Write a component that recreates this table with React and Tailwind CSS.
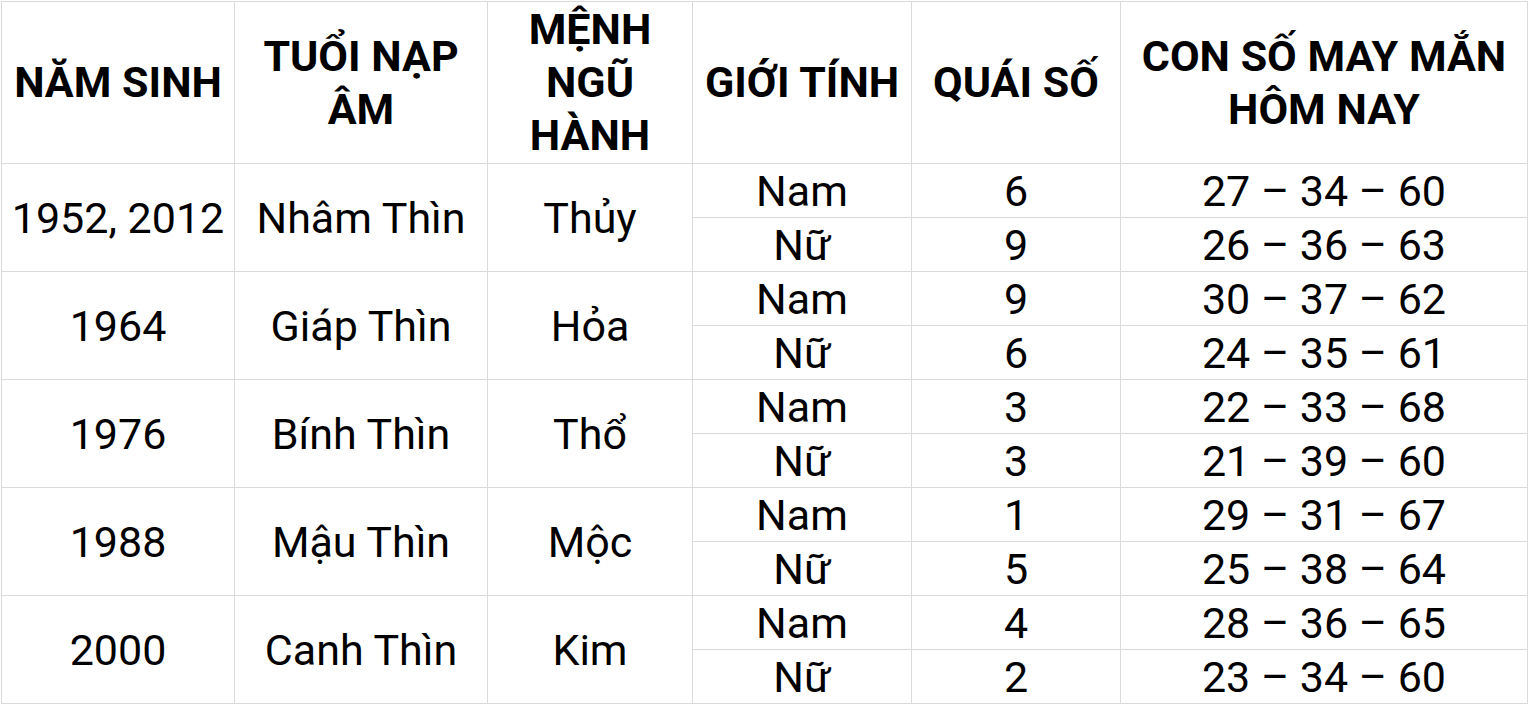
import React from 'react';

const rows = [
  { year: '1952, 2012', tuoi: 'Nhâm Thìn', menh: 'Thủy', nam: ['6', '27 – 34 – 60'], nu: ['9', '26 – 36 – 63'] },
  { year: '1964', tuoi: 'Giáp Thìn', menh: 'Hỏa', nam: ['9', '30 – 37 – 62'], nu: ['6', '24 – 35 – 61'] },
  { year: '1976', tuoi: 'Bính Thìn', menh: 'Thổ', nam: ['3', '22 – 33 – 68'], nu: ['3', '21 – 39 – 60'] },
  { year: '1988', tuoi: 'Mậu Thìn', menh: 'Mộc', nam: ['1', '29 – 31 – 67'], nu: ['5', '25 – 38 – 64'] },
  { year: '2000', tuoi: 'Canh Thìn', menh: 'Kim', nam: ['4', '28 – 36 – 65'], nu: ['2', '23 – 34 – 60'] },
];

const headers = [
  ['NĂM SINH'],
  ['TUỔI NẠP', 'ÂM'],
  ['MỆNH', 'NGŨ', 'HÀNH'],
  ['GIỚI TÍNH'],
  ['QUÁI SỐ'],
  ['CON SỐ MAY MẮN', 'HÔM NAY'],
];

function Cell({ children, span }) {
  return (
    <div className={`flex items-center justify-center bg-white text-center whitespace-nowrap ${span ? 'row-span-2' : ''}`}>
      {children}
    </div>
  );
}

export default function App() {
  return (
    <div className="h-[705px] w-[1529px] overflow-hidden bg-white pl-px pt-px text-black" style={{ fontFamily: 'Roboto, "Noto Sans", sans-serif' }}>
      <div className="grid w-max grid-cols-[232px_252px_204px_218px_208px_406px] grid-rows-[161px_repeat(10,53px)] gap-px bg-[#dadada] p-px text-[43px] leading-[52px]">
        {headers.map((lines, i) => (
          <Cell key={i}>
            <div className="font-bold leading-[53px]">
              {lines.map((l) => (
                <div key={l}>{l}</div>
              ))}
            </div>
          </Cell>
        ))}
        {rows.map((r) => (
          <React.Fragment key={r.year}>
            <Cell span>{r.year}</Cell>
            <Cell span>{r.tuoi}</Cell>
            <Cell span>{r.menh}</Cell>
            <Cell>Nam</Cell>
            <Cell>{r.nam[0]}</Cell>
            <Cell>{r.nam[1]}</Cell>
            <Cell>Nữ</Cell>
            <Cell>{r.nu[0]}</Cell>
            <Cell>{r.nu[1]}</Cell>
          </React.Fragment>
        ))}
      </div>
    </div>
  );
}
